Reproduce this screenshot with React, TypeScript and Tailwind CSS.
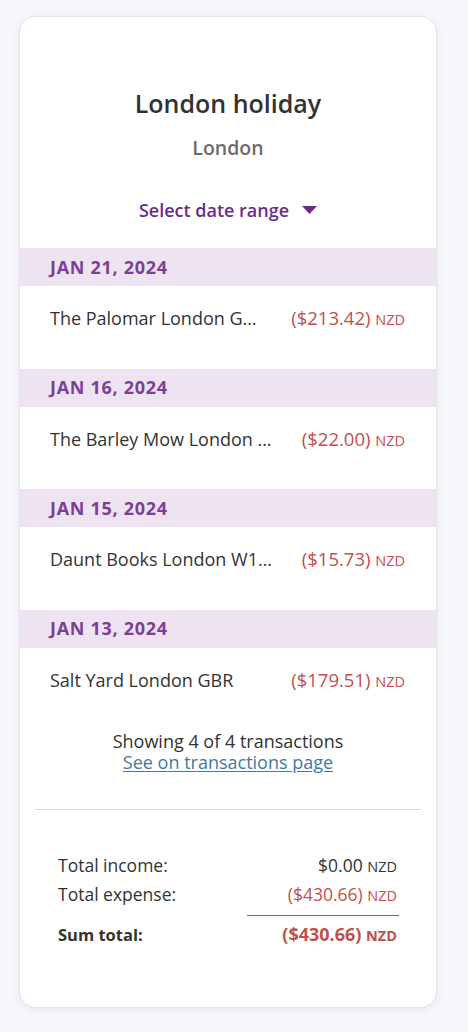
import React from "react";

const txs = [
  { date: "JAN 21, 2024", name: "The Palomar London G…", amount: "($213.42)" },
  { date: "JAN 16, 2024", name: "The Barley Mow London …", amount: "($22.00)" },
  { date: "JAN 15, 2024", name: "Daunt Books London W1…", amount: "($15.73)" },
  { date: "JAN 13, 2024", name: "Salt Yard London GBR", amount: "($179.51)" },
];

export default function App() {
  return (
    <div
      className="min-h-[1032px] w-[468px] bg-[#f7f7fb] pt-[16px] pl-[19px]"
      style={{ fontFamily: "'Open Sans', Lato, sans-serif" }}
    >
      <div className="w-[418px] h-[992px] bg-white rounded-[16px] border border-[#e3e2ea] shadow-[0_2px_8px_rgba(40,40,80,0.08)] overflow-hidden flex flex-col">
        <div className="pt-[71px] flex flex-col items-center">
          <div className="text-[25px] leading-[30px] font-semibold text-[#333333]">London holiday</div>
          <div className="mt-[18px] text-[19.5px] leading-[24px] font-semibold text-[#6b6b6b]">London</div>
          <div className="mt-[38px] flex items-center gap-[13px] text-[18px] leading-[24px] font-semibold text-[#6a2c8a]">
            <span>Select date range</span>
            <svg width="15" height="8" viewBox="0 0 15 8">
              <path d="M0 0 H15 L7.5 8 Z" fill="#6a2c8a" />
            </svg>
          </div>
        </div>
        <div className="mt-[26px]">
          {txs.map((t) => (
            <div key={t.date}>
              <div className="h-[38px] bg-[#eee3f0] flex items-center pl-[30px] text-[18px] font-bold text-[#7c3f97] tracking-[0.7px]">
                {t.date}
              </div>
              <div className="h-[82.5px] pt-[20px] pl-[30px] pr-[31px] flex items-start justify-between">
                <span className="text-[18px] leading-[24px] text-[#333333] whitespace-nowrap">{t.name}</span>
                <span className="text-[18.5px] leading-[24px] text-[#c0504d] whitespace-nowrap">
                  {t.amount} <span className="text-[14.5px]">NZD</span>
                </span>
              </div>
            </div>
          ))}
        </div>
        <div className="mt-[1px] flex flex-col items-center text-[18px] leading-[21px]">
          <div className="text-[#333333]">Showing 4 of 4 transactions</div>
          <a className="text-[#3d7aa8] underline underline-offset-2">See on transactions page</a>
        </div>
        <div className="mx-[15px] mt-[36px] h-px bg-[#dcdce0]" />
        <div className="mt-[43px] pl-[38px] pr-[37px] text-[17.5px] leading-[24px] text-[#333333]">
          <div className="flex justify-between pr-[2px]">
            <span>Total income:</span>
            <span>
              $0.00 <span className="text-[14.5px]">NZD</span>
            </span>
          </div>
          <div className="flex justify-between mt-[3px] pr-[2px]">
            <span>Total expense:</span>
            <span className="text-[#c0504d]">
              ($430.66) <span className="text-[14.5px]">NZD</span>
            </span>
          </div>
          <div className="flex justify-end mt-[7px]">
            <div className="w-[152px] h-px bg-[#6b6b6b]" />
          </div>
          <div className="flex justify-between items-baseline mt-[6px] pr-[2px] font-bold">
            <span className="text-[16.5px]">Sum total:</span>
            <span className="text-[#c0504d] text-[18px]">
              ($430.66) <span className="text-[14.5px]">NZD</span>
            </span>
          </div>
        </div>
      </div>
    </div>
  );
}
